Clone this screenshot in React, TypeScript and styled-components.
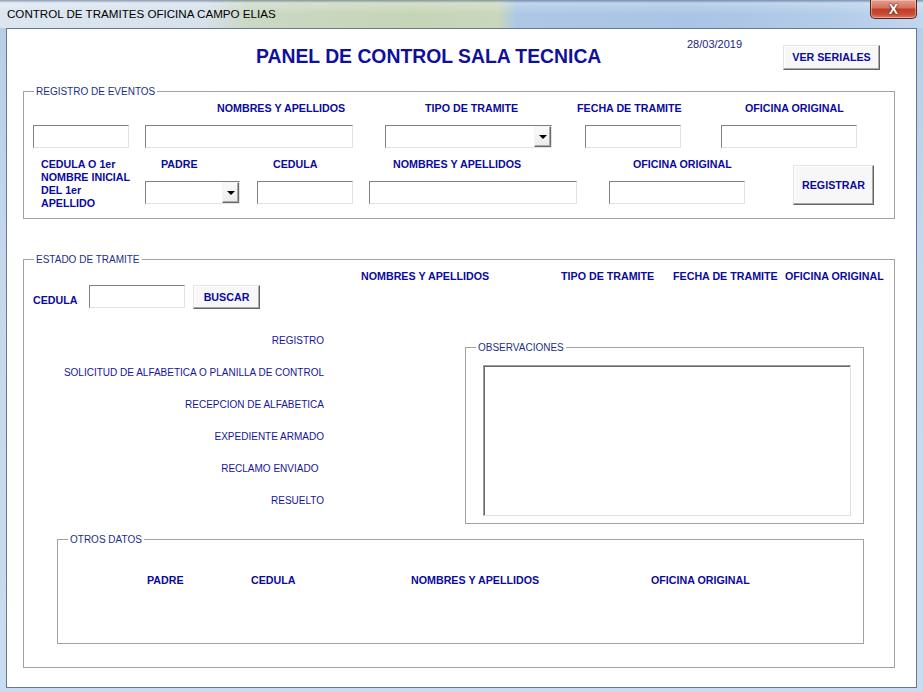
import React from "react";
import styled, { createGlobalStyle } from "styled-components";

const FONT = `"Liberation Sans", Arial, sans-serif`;
const BLUE = "#0a0a9e";
const LEGEND = "#1b2f86";

const Global = createGlobalStyle`
  html, body { margin: 0; padding: 0; background: #c4d8ee; }
  * { box-sizing: border-box; }
`;

const Window = styled.div`
  width: 923px;
  height: 692px;
  display: flex;
  flex-direction: column;
  background: linear-gradient(180deg, #b7cde7 0%, #c5d8ee 40%, #c9dcf0 100%);
  font-family: ${FONT};
  overflow: hidden;
`;

const TitleBar = styled.div`
  height: 28px;
  flex: none;
  display: flex;
  align-items: flex-start;
  padding-left: 7px;
  background:
    linear-gradient(180deg, rgba(40, 70, 110, 0.45) 0px, rgba(255, 255, 255, 0.25) 3px, rgba(255, 255, 255, 0) 14px),
    linear-gradient(90deg, #dce6f0 0%, #d6e1ec 22%, #cbd8c4 27%, #c6d5b6 45%, #c9d7bc 54%, #adc8e6 56%, #a9c5e5 75%, #b3cce9 90%, #c2d6ee 100%);
`;

const Caption = styled.div`
  margin-top: 7px;
  font: 11.6px/14px ${FONT};
  color: #000;
  white-space: nowrap;
`;

const CloseButton = styled.div`
  margin-left: auto;
  margin-right: 6px;
  width: 47px;
  height: 19px;
  display: flex;
  align-items: center;
  justify-content: center;
  border: 1px solid #5e2118;
  border-top: none;
  border-radius: 0 0 5px 5px;
  background: linear-gradient(180deg, #e4a090 0%, #d47460 42%, #c23e28 52%, #c64e36 80%, #d77e68 100%);
  box-shadow: inset 0 0 0 1px rgba(255, 220, 210, 0.45);
  color: #fff;
  font: bold 14px/1 ${FONT};
  text-shadow: 0 0 2px #4a1008, 0 0 1px #4a1008;
`;

const Body = styled.div`
  flex: 1;
  display: flex;
  padding: 0 6px 4px 6px;
`;

const Client = styled.div`
  flex: 1;
  background: #fff;
  border: 1px solid #66788c;
  display: flex;
  flex-direction: column;
`;

const Header = styled.div`
  height: 56px;
  flex: none;
  display: flex;
  align-items: flex-start;
  padding-left: 249px;
`;

const Title = styled.h1`
  margin: 16px 0 0;
  width: 431px;
  font: bold 19.35px/22px ${FONT};
  color: #10109a;
  white-space: nowrap;
`;

const DateText = styled.div`
  margin-top: 9px;
  width: 96px;
  font: 11px/13px ${FONT};
  color: #1a1a8a;
`;

const Button = styled.div<{ $w: number; $h: number; $mt?: number; $ml?: number }>`
  width: ${(p) => p.$w}px;
  height: ${(p) => p.$h}px;
  margin-top: ${(p) => p.$mt ?? 0}px;
  margin-left: ${(p) => p.$ml ?? 0}px;
  flex: none;
  display: flex;
  align-items: center;
  justify-content: center;
  background: #f7f7f7;
  border: 1px solid;
  border-color: #e4e4e4 #646464 #646464 #e4e4e4;
  box-shadow: inset -1px -1px 0 #a9a9a9, inset 1px 1px 0 #ffffff;
  font: bold 10.7px/13px ${FONT};
  color: ${BLUE};
  white-space: nowrap;
`;

const Frame = styled.fieldset<{ $ml: number; $mt: number; $w: number; $h: number }>`
  margin: ${(p) => p.$mt}px 0 0 ${(p) => p.$ml}px;
  width: ${(p) => p.$w}px;
  height: ${(p) => p.$h}px;
  flex: none;
  min-width: 0;
  padding: 0;
  border: 1px solid #a2a2a2;
`;

const Legend = styled.legend`
  margin-left: 10px;
  padding: 0 2px;
  font: 10px/13px ${FONT};
  color: ${LEGEND};
  white-space: nowrap;
`;

const FrameBody = styled.div`
  display: flex;
  flex-direction: column;
`;

const Grid = styled.div<{ $cols: string; $pl: number; $mt: number }>`
  display: grid;
  grid-template-columns: ${(p) => p.$cols};
  align-items: start;
  padding-left: ${(p) => p.$pl}px;
  margin-top: ${(p) => p.$mt}px;
`;

const Label = styled.div`
  font: bold 10.7px/13px ${FONT};
  color: ${BLUE};
  white-space: nowrap;
`;

const TextBox = styled.div<{ $w: number; $h?: number }>`
  width: ${(p) => p.$w}px;
  height: ${(p) => p.$h ?? 23}px;
  background: #fff;
  border: 1px solid;
  border-color: #7f7f7f #e2e2e2 #e2e2e2 #7f7f7f;
`;

const Combo = styled.div<{ $w: number }>`
  width: ${(p) => p.$w}px;
  height: 23px;
  display: flex;
  justify-content: flex-end;
  background: #fff;
  border: 1px solid;
  border-color: #7f7f7f #e2e2e2 #e2e2e2 #7f7f7f;
`;

const DropButton = styled.div`
  width: 17px;
  height: 21px;
  display: flex;
  align-items: center;
  justify-content: center;
  background: linear-gradient(180deg, #fafafa 0%, #ececec 100%);
  border: 1px solid;
  border-color: #f4f4f4 #6c6c6c #6c6c6c #f4f4f4;
  box-shadow: inset -1px -1px 0 #a8a8a8;

  &::after {
    content: "";
    margin-top: 1px;
    border-left: 4px solid transparent;
    border-right: 4px solid transparent;
    border-top: 4px solid #000;
  }
`;

const Row = styled.div<{ $pl?: number; $mt?: number }>`
  display: flex;
  align-items: flex-start;
  padding-left: ${(p) => p.$pl ?? 0}px;
  margin-top: ${(p) => p.$mt ?? 0}px;
`;

const MultiLabel = styled(Label)<{ $w: number; $pl: number }>`
  width: ${(p) => p.$w}px;
  padding-left: ${(p) => p.$pl}px;
  flex: none;
`;

const Stack = styled.div<{ $w: number }>`
  width: ${(p) => p.$w}px;
  flex: none;
  display: flex;
  flex-direction: column;
`;

const SearchLabel = styled(Label)`
  width: 56px;
  margin-top: 9px;
  flex: none;
`;

const StatusCol = styled.div`
  width: 300px;
  flex: none;
  display: flex;
  flex-direction: column;
  gap: 19px;
  text-align: right;
`;

const StatusText = styled.div`
  font: 10px/13px ${FONT};
  color: #1414a0;
  white-space: pre;
`;

const Memo = styled.div`
  margin: 11px 0 0 17px;
  width: 368px;
  height: 151px;
  background: #fff;
  border: 1px solid;
  border-color: #9a9a9a #e0e0e0 #e0e0e0 #9a9a9a;
  box-shadow: inset 1px 1px 0 #6a6a6a;
`;

const statuses = [
  "REGISTRO",
  "SOLICITUD DE ALFABETICA O PLANILLA DE CONTROL",
  "RECEPCION DE ALFABETICA",
  "EXPEDIENTE ARMADO",
  "RECLAMO ENVIADO  ",
  "RESUELTO",
];

export default function App() {
  return (
    <>
      <Global />
      <Window>
        <TitleBar>
          <Caption>CONTROL DE TRAMITES OFICINA CAMPO ELIAS</Caption>
          <CloseButton>X</CloseButton>
        </TitleBar>
        <Body>
          <Client>
            <Header>
              <Title>PANEL DE CONTROL SALA TECNICA</Title>
              <DateText>28/03/2019</DateText>
              <Button $w={97} $h={25} $mt={16}>VER SERIALES</Button>
            </Header>

            <Frame $ml={16} $mt={0} $w={872} $h={134}>
              <Legend>REGISTRO DE EVENTOS</Legend>
              <FrameBody>
                <Grid $cols="208px 152px 168px auto" $pl={193} $mt={4}>
                  <Label>NOMBRES Y APELLIDOS</Label>
                  <Label>TIPO DE TRAMITE</Label>
                  <Label>FECHA DE TRAMITE</Label>
                  <Label>OFICINA ORIGINAL</Label>
                </Grid>
                <Grid $cols="112px 240px 200px 136px auto" $pl={9} $mt={10}>
                  <TextBox $w={96} />
                  <TextBox $w={208} />
                  <Combo $w={167}>
                    <DropButton />
                  </Combo>
                  <TextBox $w={96} />
                  <TextBox $w={136} />
                </Grid>
                <Row $mt={10}>
                  <MultiLabel $w={121} $pl={17}>
                    CEDULA O 1er
                    <br />
                    NOMBRE INICIAL
                    <br />
                    DEL 1er
                    <br />
                    APELLIDO
                  </MultiLabel>
                  <Stack $w={648}>
                    <Grid $cols="112px 120px 240px auto" $pl={16} $mt={0}>
                      <Label>PADRE</Label>
                      <Label>CEDULA</Label>
                      <Label>NOMBRES Y APELLIDOS</Label>
                      <Label>OFICINA ORIGINAL</Label>
                    </Grid>
                    <Grid $cols="112px 112px 240px auto" $pl={0} $mt={10}>
                      <Combo $w={95}>
                        <DropButton />
                      </Combo>
                      <TextBox $w={96} />
                      <TextBox $w={208} />
                      <TextBox $w={136} />
                    </Grid>
                  </Stack>
                  <Button $w={81} $h={40} $mt={7}>REGISTRAR</Button>
                </Row>
              </FrameBody>
            </Frame>

            <Frame $ml={16} $mt={34} $w={872} $h={415}>
              <Legend>ESTADO DE TRAMITE</Legend>
              <FrameBody>
                <Grid $cols="200px 112px 112px auto" $pl={337} $mt={4}>
                  <Label>NOMBRES Y APELLIDOS</Label>
                  <Label>TIPO DE TRAMITE</Label>
                  <Label>FECHA DE TRAMITE</Label>
                  <Label>OFICINA ORIGINAL</Label>
                </Grid>
                <Row $pl={9} $mt={2}>
                  <SearchLabel>CEDULA</SearchLabel>
                  <TextBox $w={96} />
                  <Button $w={67} $h={24} $ml={8}>BUSCAR</Button>
                </Row>
                <Row $mt={25}>
                  <StatusCol>
                    {statuses.map((s) => (
                      <StatusText key={s}>{s}</StatusText>
                    ))}
                  </StatusCol>
                  <Frame $ml={141} $mt={7} $w={399} $h={183}>
                    <Legend>OBSERVACIONES</Legend>
                    <Memo />
                  </Frame>
                </Row>
                <Frame $ml={33} $mt={9} $w={807} $h={111}>
                  <Legend>OTROS DATOS</Legend>
                  <Grid $cols="104px 160px 240px auto" $pl={89} $mt={28}>
                    <Label>PADRE</Label>
                    <Label>CEDULA</Label>
                    <Label>NOMBRES Y APELLIDOS</Label>
                    <Label>OFICINA ORIGINAL</Label>
                  </Grid>
                </Frame>
              </FrameBody>
            </Frame>
          </Client>
        </Body>
      </Window>
    </>
  );
}
